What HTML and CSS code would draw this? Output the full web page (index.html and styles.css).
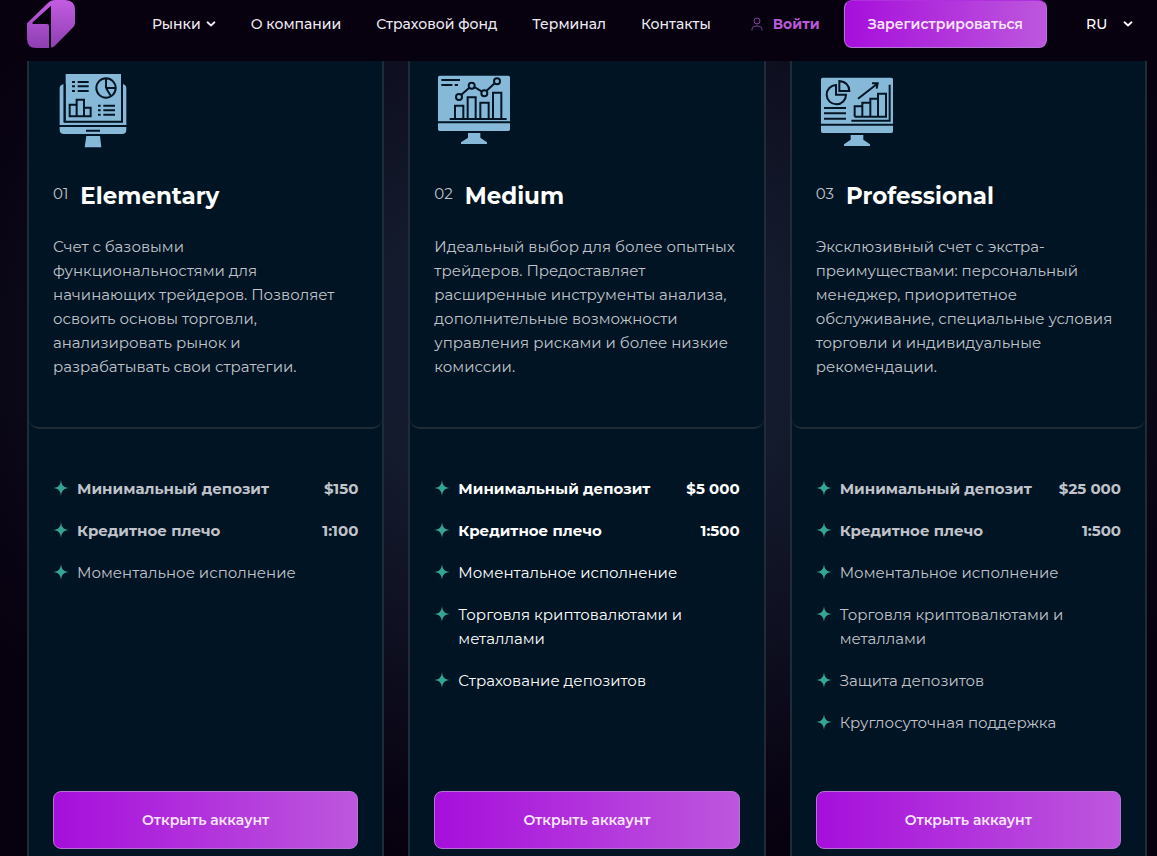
FILE: index.html
```html
<!DOCTYPE html>
<html lang="ru">
<head>
<meta charset="utf-8">
<meta name="viewport" content="width=device-width, initial-scale=1">
<title>Типы счетов</title>
<link rel="stylesheet" href="styles.css">
</head>
<body>
<svg class="sprite" aria-hidden="true">
  <symbol id="star" viewBox="0 0 14 14"><path d="M7 0 C7.5 4.8 9.2 6.5 14 7 C9.2 7.5 7.5 9.2 7 14 C6.5 9.2 4.8 7.5 0 7 C4.8 6.5 6.5 4.8 7 0Z"/></symbol>
  <symbol id="chevron" viewBox="0 0 8 6"><path d="M1.2 1.6 L4 4.2 L6.8 1.6" fill="none" stroke="currentColor" stroke-width="1.4" stroke-linecap="round" stroke-linejoin="round"/></symbol>
</svg>
<header class="header">
  <a class="logo" href="#" aria-label="Главная">
    <svg width="48" height="48" viewBox="0 0 144 144">
      <defs><linearGradient id="brand" x1="0" y1="0" x2="0" y2="144" gradientUnits="userSpaceOnUse"><stop offset="0" stop-color="#c35ce2"/><stop offset="1" stop-color="#8d3fb0"/></linearGradient></defs>
      <path fill="url(#brand)" d="M0 70 L66 6 Q74 0 84 0 H114 Q144 0 144 30 V69 Q144 76 139 81 L83 138 Q76 145 72 141 V17 L17 67 Q15 72 20 72 H60 Q66 72 66 79 V144 H28 Q0 144 0 116Z"/>
    </svg>
  </a>
  <nav class="nav">
    <button class="nav-item" type="button">Рынки <svg class="chevron" width="10" height="8"><use href="#chevron"/></svg></button>
    <a class="nav-item" href="#">О компании</a>
    <a class="nav-item" href="#">Страховой фонд</a>
    <a class="nav-item" href="#">Терминал</a>
    <a class="nav-item" href="#">Контакты</a>
  </nav>
  <a class="login" href="#"><svg width="12" height="14" viewBox="0 0 12 14" fill="none" stroke="currentColor" stroke-width="1"><circle cx="6" cy="4" r="3"/><path d="M1 13.5 V12.5 Q1 9 6 9 Q11 9 11 12.5 V13.5"/></svg>Войти</a>
  <button class="btn btn-register" type="button">Зарегистрироваться</button>
  <div class="lang">
    <select aria-label="Язык"><option>RU</option><option>EN</option></select>
    <svg class="chevron" width="10" height="8"><use href="#chevron"/></svg>
  </div>
</header>
<main class="plans">
  <article class="card">
    <div class="card-top">
      <svg class="plan-icon" viewBox="24 36 240 240">
        <path class="fill" d="M62 42 H228 V183 H62Z M56 72 V187 H234 V72 Q244 75 244 84 V195 H44 V84 Q44 75 56 72Z M44 201 H244 V209 Q244 222 231 222 H57 Q44 222 44 209Z M124 228 H165 L169 262 H119Z"/>
        <path class="line" d="M81 66 H90 M98 66 H131 M81 79 H90 M98 79 H131 M81 93 H90 M98 93 H131 M159 137 H167 M175 137 H210 M159 151 H167 M175 151 H210 M159 164 H167 M175 164 H210 M123 212 H165"/>
        <path class="line" d="M59 72 V185 H231 V72 M74 169 V134 H95 V119 H117 V143 H137 V169Z M95 134 V169 M117 143 V169 M183 84 V55 M183 84 H213 M183 84 L198 109"/>
        <circle class="line" cx="183" cy="84" r="29"/>
      </svg>
      <h2 class="title"><span class="num">01</span> Elementary</h2>
      <p class="desc">Счет с базовыми функциональностями для начинающих трейдеров. Позволяет освоить основы торговли, анализировать рынок и разрабатывать свои стратегии.</p>
    </div>
    <div class="card-body">
      <ul class="features">
        <li class="strong"><svg class="star"><use href="#star"/></svg><span>Минимальный депозит</span><span class="value">$150</span></li>
        <li class="strong"><svg class="star"><use href="#star"/></svg><span>Кредитное плечо</span><span class="value">1:100</span></li>
        <li><svg class="star"><use href="#star"/></svg><span>Моментальное исполнение</span></li>
      </ul>
      <button class="btn btn-open" type="button">Открыть аккаунт</button>
    </div>
  </article>
  <article class="card featured">
    <div class="card-top">
      <svg class="plan-icon" viewBox="27 36 240 240">
        <path class="fill" d="M44 47 H250 Q255 47 255 52 V184 H39 V52 Q39 47 44 47Z M39 190 H255 V208 Q255 213 250 213 H44 Q39 213 39 208Z M129 219 H166 V233 L186 247 V252 H108 V247 L129 233Z"/>
        <path class="line" d="M49 60 H105 M49 75 H82 M89 75 H99 M74 177 H245 M90 177 V137 H115 V177 M128 177 V112 H152 V177 M166 177 V128 H191 V177 M204 177 V98 H229 V177"/>
        <path class="line" d="M108 105 L133 83 M148 81 L171 95 M184 93 L209 70"/>
        <g class="line"><circle cx="102" cy="111" r="9"/><circle cx="140" cy="77" r="9"/><circle cx="178" cy="100" r="9"/><circle cx="216" cy="64" r="9"/></g>
      </svg>
      <h2 class="title"><span class="num">02</span> Medium</h2>
      <p class="desc">Идеальный выбор для более опытных трейдеров. Предоставляет расширенные инструменты анализа, дополнительные возможности управления рисками и более низкие комиссии.</p>
    </div>
    <div class="card-body">
      <ul class="features">
        <li class="strong"><svg class="star"><use href="#star"/></svg><span>Минимальный депозит</span><span class="value">$5 000</span></li>
        <li class="strong"><svg class="star"><use href="#star"/></svg><span>Кредитное плечо</span><span class="value">1:500</span></li>
        <li><svg class="star"><use href="#star"/></svg><span>Моментальное исполнение</span></li>
        <li><svg class="star"><use href="#star"/></svg><span>Торговля криптовалютами и металлами</span></li>
        <li><svg class="star"><use href="#star"/></svg><span>Страхование депозитов</span></li>
      </ul>
      <button class="btn btn-open" type="button">Открыть аккаунт</button>
    </div>
  </article>
  <article class="card">
    <div class="card-top">
      <svg class="plan-icon" viewBox="18 36 240 240">
        <path class="fill" d="M38 53 H244 Q249 53 249 58 V191 H33 V58 Q33 53 38 53Z M33 197 H249 V214 Q249 219 244 219 H38 Q33 219 33 214Z M122 225 H160 V239 L180 253 V258 H102 V253 L122 239Z"/>
        <path class="line" d="M78 75 A29 29 0 1 0 108 104 H78Z M88 63 V93 H118 Q117 66 88 63Z M42 144 H108 M42 160 H108 M42 176 H108 M124 182 H239 V74"/>
        <path class="line" d="M134 170 V139 H157 V170 M157 139 V128 H181 V170 M181 128 V116 H204 V170 M204 116 V101 H228 V170 H134 M144 116 L201 72 M186 70 H203 L200 86"/>
      </svg>
      <h2 class="title"><span class="num">03</span> Professional</h2>
      <p class="desc">Эксклюзивный счет с экстра-преимуществами: персональный менеджер, приоритетное обслуживание, специальные условия торговли и индивидуальные рекомендации.</p>
    </div>
    <div class="card-body">
      <ul class="features">
        <li class="strong"><svg class="star"><use href="#star"/></svg><span>Минимальный депозит</span><span class="value">$25 000</span></li>
        <li class="strong"><svg class="star"><use href="#star"/></svg><span>Кредитное плечо</span><span class="value">1:500</span></li>
        <li><svg class="star"><use href="#star"/></svg><span>Моментальное исполнение</span></li>
        <li><svg class="star"><use href="#star"/></svg><span>Торговля криптовалютами и металлами</span></li>
        <li><svg class="star"><use href="#star"/></svg><span>Защита депозитов</span></li>
        <li><svg class="star"><use href="#star"/></svg><span>Круглосуточная поддержка</span></li>
      </ul>
      <button class="btn btn-open" type="button">Открыть аккаунт</button>
    </div>
  </article>
</main>
</body>
</html>
```
FILE: styles.css
```css
* { box-sizing: border-box; }

body {
  margin: 0;
  background: #07000f;
  color: #fff;
  font: 400 15px/24px Montserrat, Inter, "Noto Sans", sans-serif;
}

.sprite { display: none; }
svg { flex: none; display: block; }
a { color: inherit; text-decoration: none; }
button, select { font: inherit; color: inherit; }

.header {
  display: flex;
  align-items: center;
  padding: 0 24px 13px 27px;
  background: #07000f;
  font-size: 14px;
  font-weight: 500;
}

.logo { margin-right: 77px; }

.nav { display: flex; gap: 35px; }

.nav-item {
  display: flex;
  align-items: center;
  gap: 5px;
  padding: 0;
  border: 0;
  background: none;
  color: #eeeaf2;
  white-space: nowrap;
}

.login {
  display: flex;
  align-items: center;
  gap: 10px;
  margin-left: auto;
  color: #b75bd8;
  font-weight: 700;
}

.login svg { color: #83459c; }

.btn {
  border: 1px solid #b673d6;
  border-radius: 8px;
  background: linear-gradient(90deg, #a60fdb, #bd57dd);
  color: #fbe6ff;
  font-size: 14px;
  font-weight: 600;
  cursor: pointer;
}

.btn-register {
  height: 48px;
  margin-left: 24px;
  padding: 0 23px;
  border-top-color: #b02fdf;
}

.lang {
  display: flex;
  align-items: center;
  margin-left: 39px;
}

.lang select {
  width: 37px;
  padding: 0;
  border: 0;
  appearance: none;
  background: none;
}

.plans {
  display: grid;
  grid-template-columns: repeat(3, minmax(0, 1fr));
  gap: 24px;
  padding: 0 10px 0 27px;
  background: radial-gradient(ellipse 60% 64% at 50% 37%, #192036, #131a2c 34%, #07000f);
}

.card {
  display: flex;
  flex-direction: column;
  border: solid #1f2c38;
  border-width: 0 2px;
  background: #001423;
}

.card-top {
  padding: 11px 24px 48px;
  border-bottom: 2px solid #1f2c38;
  border-radius: 0 0 10px 10px;
}

.plan-icon { width: 80px; height: 80px; }
.plan-icon .fill { fill: #86b9d7; }
.plan-icon .line { fill: none; stroke: #001423; stroke-width: 6; }

.title {
  display: flex;
  gap: 12px;
  margin: 26px 0 21px;
  font-size: 23px;
  line-height: 36px;
  font-weight: 700;
}

.num {
  color: #c2c5cc;
  font-size: 15px;
  line-height: 32px;
  font-weight: 400;
}

.desc { margin: 0; color: #c0c3ca; }

.card-body {
  display: flex;
  flex: 1;
  flex-direction: column;
  padding: 48px 24px 7px;
}

.features {
  display: grid;
  gap: 18px;
  margin: 0 0 56px;
  padding: 0;
  list-style: none;
  color: #c0c3ca;
}

.features li { display: flex; }
.featured .features { color: #fff; }
.strong { font-weight: 700; }
.value { margin-left: auto; }

.star {
  width: 16px;
  height: 16px;
  margin: 3px 8px 0 0;
  fill: #35a497;
}

.btn-open { height: 58px; margin-top: auto; }
```
